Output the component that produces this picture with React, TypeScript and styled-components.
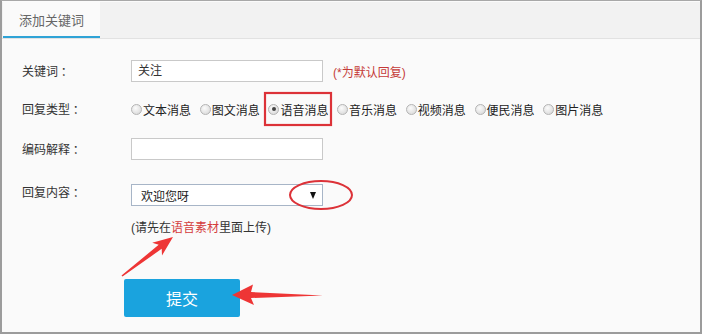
import styled, { createGlobalStyle } from 'styled-components';

const GlobalStyle = createGlobalStyle`
  body {
    margin: 0;
    background: #fff;
    font-family: 'Liberation Sans', 'Noto Sans CJK SC', sans-serif;
  }
`;

const Frame = styled.div`
  position: relative;
  width: 702px;
  height: 334px;
  box-sizing: border-box;
  border: 2px solid #9c9c9c;
  border-top: 1px solid #a8a8a8;
  background: #fafafa;
  overflow: hidden;
`;

const TabBar = styled.div`
  display: flex;
  height: 36px;
  background: #f2f2f2;
  border-top: 1px solid #fbfbfb;
  border-bottom: 1px solid #e2e2e2;
`;

const Tab = styled.div<{ $active?: boolean }>`
  display: flex;
  align-items: center;
  justify-content: center;
  width: 97px;
  margin-left: 1px;
  font-size: 13px;
  color: #666;
  background: ${(p) => (p.$active ? '#fafafa' : 'transparent')};
  border-bottom: 2px solid ${(p) => (p.$active ? '#2fa3d6' : 'transparent')};
`;

const Form = styled.div`
  display: flex;
  flex-direction: column;
  padding: 21px 0 0 20px;
`;

const Row = styled.div<{ $gap: number }>`
  display: grid;
  grid-template-columns: 109px auto;
  align-items: center;
  margin-bottom: ${(p) => p.$gap}px;
`;

const Label = styled.label<{ $top?: boolean }>`
  font-family: 'Noto Sans CJK SC', sans-serif;
  font-size: 12px;
  color: #333;
  align-self: ${(p) => (p.$top ? 'start' : 'center')};
  line-height: 16px;
  white-space: pre;
`;

const Field = styled.div`
  display: flex;
  align-items: center;
  gap: 10px;
`;

const TextInput = styled.div`
  width: 192px;
  height: 22px;
  box-sizing: border-box;
  border: 1px solid #c9c9c9;
  background: #fff;
  font-size: 12px;
  color: #333;
  padding: 0 6px;
  line-height: 20px;
`;

const Hint = styled.span`
  font-size: 12px;
  color: #c53a38;
`;

const RadioGroup = styled.div`
  display: flex;
  gap: 8.7px;
  height: 22px;
  align-items: center;
`;

const RadioItem = styled.span`
  display: flex;
  align-items: center;
  font-size: 12px;
  color: #222;
`;

const RadioDot = styled.span<{ $checked?: boolean }>`
  display: inline-block;
  position: relative;
  width: 11px;
  height: 11px;
  margin-right: 1px;
  border-radius: 50%;
  box-sizing: border-box;
  border: 1px solid #b4b4b4;
  background: radial-gradient(circle at 40% 35%, #fbfbfb, #d3d3d3);
  &::after {
    content: '';
    display: ${(p) => (p.$checked ? 'block' : 'none')};
    position: absolute;
    left: 2.5px;
    top: 2.5px;
    width: 4px;
    height: 4px;
    border-radius: 50%;
    background: #444;
  }
`;

const Select = styled.div`
  display: flex;
  align-items: center;
  justify-content: space-between;
  width: 192px;
  height: 22px;
  box-sizing: border-box;
  border: 1px solid #a7b5c7;
  background: #fff;
  font-size: 12px;
  color: #222;
  padding: 0 6px 0 9px;
`;

const Caret = styled.span`
  width: 0;
  height: 0;
  border-left: 3.5px solid transparent;
  border-right: 3.5px solid transparent;
  border-top: 7px solid #111;
`;

const Note = styled.div`
  margin-left: 109px;
  font-size: 12px;
  color: #333;
  line-height: 16px;
`;

const NoteRed = styled.span`
  color: #d43c3c;
`;

const SubmitButton = styled.button`
  margin: 43px 0 0 102px;
  width: 116px;
  height: 38px;
  border: none;
  border-radius: 2px;
  background: #1aa3de;
  color: #fff;
  font-size: 16px;
  font-family: 'Noto Sans CJK SC', sans-serif;
`;

const Marks = styled.svg`
  position: absolute;
  left: -2px;
  top: -1px;
  pointer-events: none;
`;

const radioTypes = ['文本消息', '图文消息', '语音消息', '音乐消息', '视频消息', '便民消息', '图片消息'];

export default function App() {
  return (
    <>
      <GlobalStyle />
      <Frame>
        <TabBar>
          <Tab $active>添加关键词</Tab>
        </TabBar>
        <Form>
          <Row $gap={16}>
            <Label>关键词 ：</Label>
            <Field>
              <TextInput>关注</TextInput>
              <Hint>(*为默认回复)</Hint>
            </Field>
          </Row>
          <Row $gap={18}>
            <Label>回复类型 ：</Label>
            <RadioGroup>
              {radioTypes.map((t) => (
                <RadioItem key={t}>
                  <RadioDot $checked={t === '语音消息'} />
                  {t}
                </RadioItem>
              ))}
            </RadioGroup>
          </Row>
          <Row $gap={24}>
            <Label>编码解释 ：</Label>
            <TextInput />
          </Row>
          <Row $gap={14}>
            <Label $top>回复内容 ：</Label>
            <Select>
              欢迎您呀
              <Caret />
            </Select>
          </Row>
          <Note>
            (请先在<NoteRed>语音素材</NoteRed>里面上传)
          </Note>
          <SubmitButton>提交</SubmitButton>
        </Form>
        <Marks width="702" height="334" viewBox="0 0 702 334">
          <rect x="265" y="93" width="66" height="32" fill="none" stroke="#dc3238" strokeWidth="2.2" />
          <ellipse cx="321" cy="195" rx="31" ry="14" fill="none" stroke="#dc3238" strokeWidth="2" />
          <polygon
            points="173,237 162,255.6 161.7,248.8 122.5,276.5 121.5,275.5 158.7,244.8 152.2,242.8"
            fill="#ee3535"
          />
          <polygon points="232,295 253,284.5 251,292 323,295.5 251,298 254,305" fill="#ee3535" />
        </Marks>
      </Frame>
    </>
  );
}
